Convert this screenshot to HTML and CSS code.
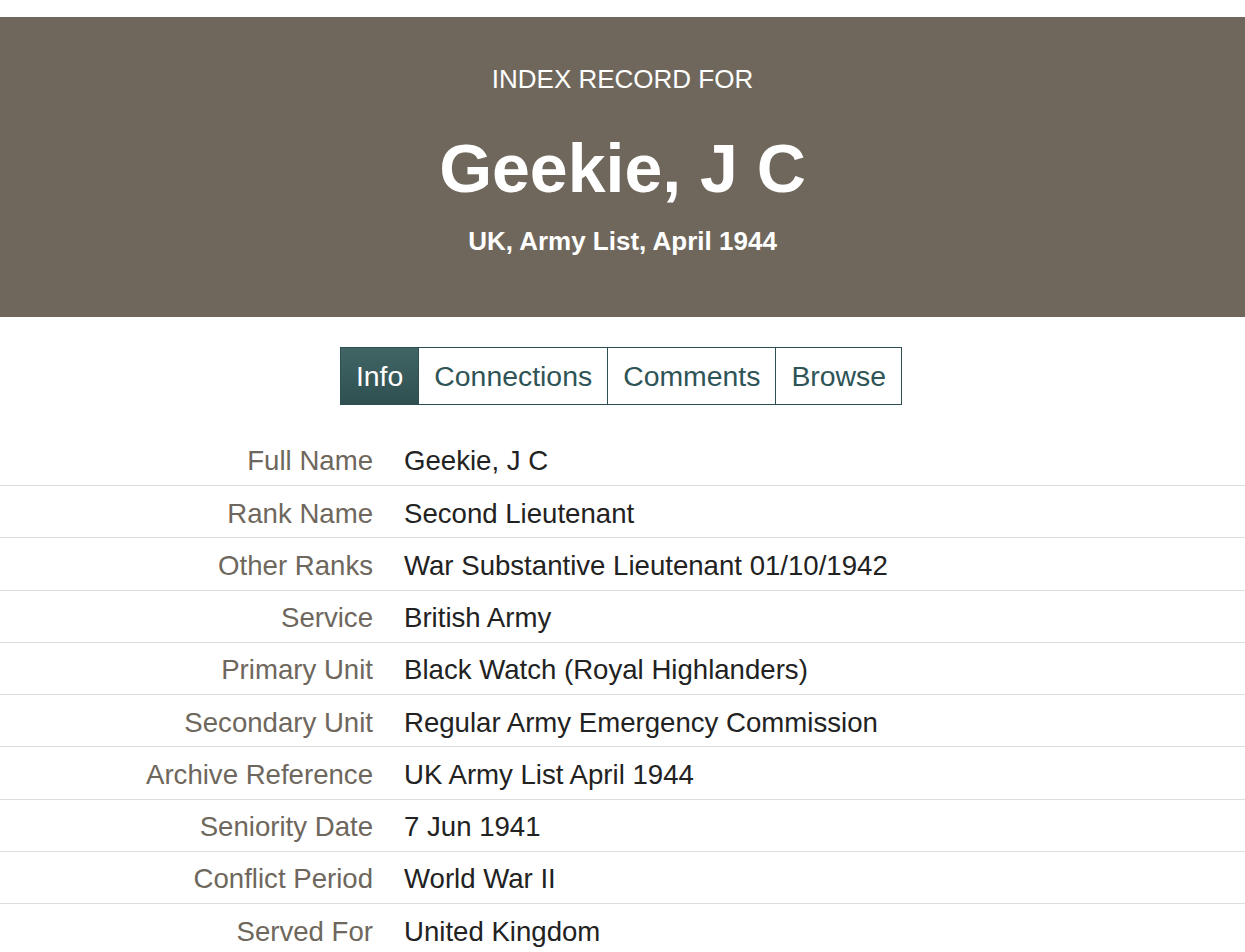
FILE: index.html
```html
<!DOCTYPE html>
<html>
<head>
<meta charset="utf-8">
<link rel="stylesheet" href="styles.css">
</head>
<body>
<header class="hero">
  <div class="kicker">INDEX RECORD FOR</div>
  <h1 class="name">Geekie, J C</h1>
  <div class="source">UK, Army List, April 1944</div>
</header>
<nav class="tabs">
  <a class="tab active">Info</a>
  <a class="tab">Connections</a>
  <a class="tab">Comments</a>
  <a class="tab">Browse</a>
</nav>
<div class="record">
  <div class="row"><div class="label">Full Name</div><div class="value">Geekie, J C</div></div>
  <div class="row"><div class="label">Rank Name</div><div class="value">Second Lieutenant</div></div>
  <div class="row"><div class="label">Other Ranks</div><div class="value">War Substantive Lieutenant 01/10/1942</div></div>
  <div class="row"><div class="label">Service</div><div class="value">British Army</div></div>
  <div class="row"><div class="label">Primary Unit</div><div class="value">Black Watch (Royal Highlanders)</div></div>
  <div class="row"><div class="label">Secondary Unit</div><div class="value">Regular Army Emergency Commission</div></div>
  <div class="row"><div class="label">Archive Reference</div><div class="value">UK Army List April 1944</div></div>
  <div class="row"><div class="label">Seniority Date</div><div class="value">7 Jun 1941</div></div>
  <div class="row"><div class="label">Conflict Period</div><div class="value">World War II</div></div>
  <div class="row"><div class="label">Served For</div><div class="value">United Kingdom</div></div>
</div>
</body>
</html>
```
FILE: styles.css
```css
html, body { margin: 0; padding: 0; background: #fff; }
body {
  font-family: "Liberation Sans", Arial, sans-serif;
  color: #222;
  padding-top: 17px;
}
.hero {
  background: #6f675c;
  color: #fff;
  height: 300px;
  box-sizing: border-box;
  text-align: center;
  padding-top: 46px;
}
.kicker {
  font-size: 26px;
  line-height: 32px;
}
.name {
  margin: 0;
  margin-top: 35px;
  font-size: 68px;
  line-height: 76px;
  font-weight: bold;
}
.source {
  margin-top: 20px;
  font-size: 26px;
  line-height: 30px;
  font-weight: bold;
}
.tabs {
  display: flex;
  justify-content: center;
  margin-top: 30px;
  padding-right: 3px;
}
.tab {
  display: block;
  height: 58px;
  box-sizing: border-box;
  border: 1px solid #2f5052;
  margin-left: -1px;
  padding: 0 15px;
  font-size: 28.4px;
  line-height: 56px;
  color: #2f5456;
}
.tab:first-child { margin-left: 0; }
.tab.active {
  background: linear-gradient(#416464, #2e5050);
  color: #fff;
}
.record {
  margin-top: 28.75px;
}
.row {
  display: grid;
  grid-template-columns: 373px 1fr;
  column-gap: 31px;
  height: 52.25px;
  align-items: center;
  padding-top: 4px;
  border-bottom: 1px solid #dedede;
  box-sizing: border-box;
  font-size: 27.6px;
}
.label {
  text-align: right;
  color: #6e675d;
}
.value {
  color: #222;
}
```
